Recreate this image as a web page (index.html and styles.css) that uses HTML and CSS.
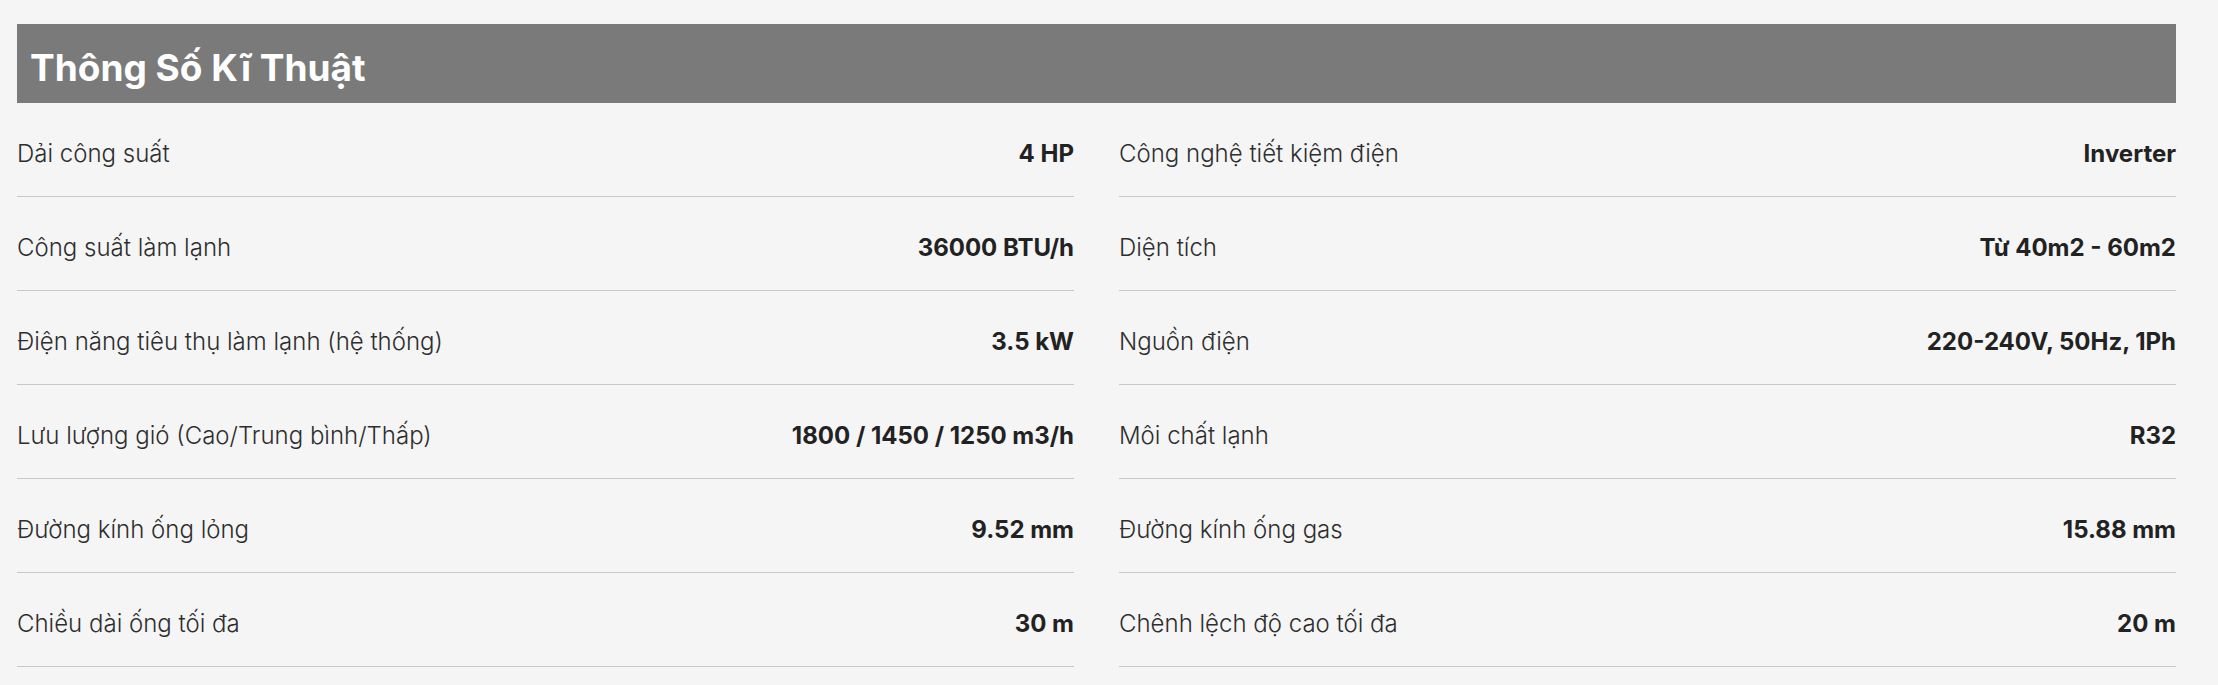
FILE: index.html
```html
<!DOCTYPE html>
<html lang="vi">
<head>
<meta charset="utf-8">
<title>Thông Số Kĩ Thuật</title>
<link rel="stylesheet" href="styles.css">
</head>
<body>
<section class="specs">
  <h2 class="specs-title">Thông Số Kĩ Thuật</h2>
  <div class="specs-grid">
    <div class="spec-row"><span class="spec-label">Dải công suất</span><span class="spec-value">4 HP</span></div>
    <div class="spec-row"><span class="spec-label">Công nghệ tiết kiệm điện</span><span class="spec-value">Inverter</span></div>
    <div class="spec-row"><span class="spec-label">Công suất làm lạnh</span><span class="spec-value">36000 BTU/h</span></div>
    <div class="spec-row"><span class="spec-label">Diện tích</span><span class="spec-value">Từ 40m2 - 60m2</span></div>
    <div class="spec-row"><span class="spec-label">Điện năng tiêu thụ làm lạnh (hệ thống)</span><span class="spec-value">3.5 kW</span></div>
    <div class="spec-row"><span class="spec-label">Nguồn điện</span><span class="spec-value">220-240V, 50Hz, 1Ph</span></div>
    <div class="spec-row"><span class="spec-label">Lưu lượng gió (Cao/Trung bình/Thấp)</span><span class="spec-value">1800 / 1450 / 1250 m3/h</span></div>
    <div class="spec-row"><span class="spec-label">Môi chất lạnh</span><span class="spec-value">R32</span></div>
    <div class="spec-row"><span class="spec-label">Đường kính ống lỏng</span><span class="spec-value">9.52 mm</span></div>
    <div class="spec-row"><span class="spec-label">Đường kính ống gas</span><span class="spec-value">15.88 mm</span></div>
    <div class="spec-row"><span class="spec-label">Chiều dài ống tối đa</span><span class="spec-value">30 m</span></div>
    <div class="spec-row"><span class="spec-label">Chênh lệch độ cao tối đa</span><span class="spec-value">20 m</span></div>
  </div>
</section>
</body>
</html>
```
FILE: styles.css
```css
html, body {
  margin: 0;
  padding: 0;
  background: #f5f5f5;
}

body {
  font-family: "Inter", "Liberation Sans", sans-serif;
  color: #222;
}

.specs {
  width: 2159px;
  margin: 24px 0 0 17px;
}

.specs-title {
  margin: 0;
  height: 79px;
  box-sizing: border-box;
  padding: 7px 0 0 13px;
  display: flex;
  align-items: center;
  background: #7a7a7a;
  color: #fff;
  font-size: 37px;
  font-weight: 700;
}

.specs-grid {
  display: grid;
  grid-template-columns: 1fr 1fr;
  column-gap: 45px;
}

.spec-row {
  height: 94px;
  box-sizing: border-box;
  border-bottom: 1px solid #c8c8c8;
  padding-top: 8px;
  display: flex;
  align-items: center;
  justify-content: space-between;
}

.spec-label {
  font-size: 24px;
  font-weight: 300;
  color: #2e2e2e;
}

.spec-value {
  font-size: 24px;
  font-weight: 700;
  color: #222;
}
```
